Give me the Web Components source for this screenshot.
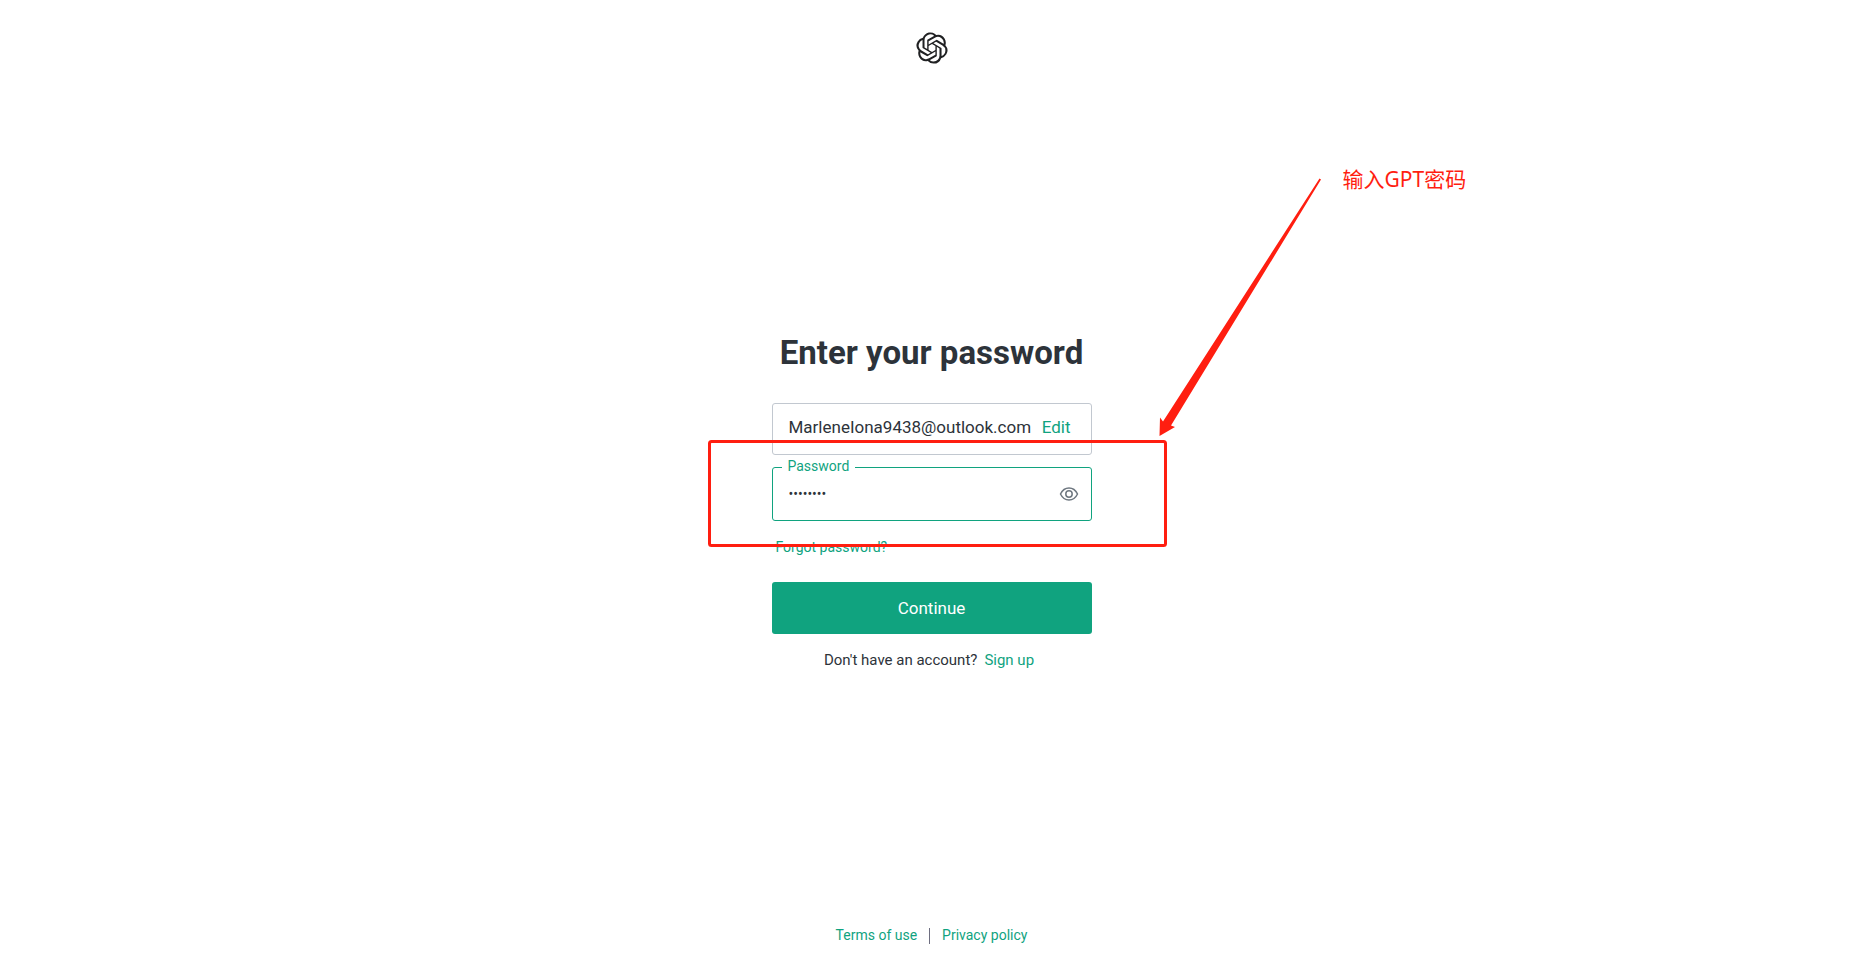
<!DOCTYPE html>
<html lang="en">
<head>
<meta charset="utf-8">
<title>Enter your password</title>
<style>
  body {
    margin: 0;
    background: #fff;
    color: #2d333a;
    font-family: Roboto, "Noto Sans CJK SC", sans-serif;
    font-size: 14px;
    line-height: 20px;
    --accent: #10a37f;
    --mark: #ff1e10;
  }
</style>
</head>
<body>
<login-page></login-page>

<template id="login-page">
  <style>
    :host { display: flex; flex-direction: column; min-height: 100vh; overflow: hidden; }
    header { display: flex; justify-content: center; padding-top: 32px; }
    main { flex: 1; display: flex; flex-direction: column; align-items: center; justify-content: center; padding-top: 13px; }
    section { position: relative; width: 320px; }
    h1 { margin: 0 -10px 30px; font-size: 33px; line-height: 40px; font-weight: 700; text-align: center; }
    form { display: flex; flex-direction: column; }
    email-box { margin-bottom: 12px; }
    a { color: var(--accent); text-decoration: none; }
    .forgot { align-self: flex-start; margin: 16px 0 25px 4px; }
    button { height: 52px; border: 0; border-radius: 3px; background: var(--accent); color: #fff; font: inherit; font-size: 17px; cursor: pointer; }
    p { display: flex; justify-content: center; gap: 7px; margin: 16px 5px 0 0; font-size: 15px; }
    footer { display: flex; justify-content: center; gap: 12px; padding-bottom: 24px; }
    footer span { width: 1px; height: 16px; margin-top: 3px; background: #6e6e80; }
  </style>
  <header><brand-logo></brand-logo></header>
  <main>
    <section>
      <h1>Enter your password</h1>
      <form onsubmit="return false">
        <email-box>MarleneIona9438@outlook.com</email-box>
        <password-field></password-field>
        <a class="forgot" href="#reset">Forgot password?</a>
        <button type="submit">Continue</button>
      </form>
      <p>Don't have an account? <a href="#signup">Sign up</a></p>
      <callout-note>输入GPT密码</callout-note>
    </section>
  </main>
  <footer><a href="#terms">Terms of use</a><span></span><a href="#privacy">Privacy policy</a></footer>
</template>

<template id="brand-logo">
  <style>:host { display: block; height: 32px; } svg { display: block; }</style>
  <svg width="32" height="32" viewBox="-.3 -.3 24.600 24.600" fill="#202123" role="img" aria-label="OpenAI"><path d="M22.2819 9.8211a5.9847 5.9847 0 0 0-.5157-4.9108 6.0462 6.0462 0 0 0-6.5098-2.9A6.0651 6.0651 0 0 0 4.9807 4.1818a5.9847 5.9847 0 0 0-3.9977 2.9 6.0462 6.0462 0 0 0 .7427 7.0966 5.98 5.98 0 0 0 .511 4.9107 6.051 6.051 0 0 0 6.5146 2.9001A5.9847 5.9847 0 0 0 13.2599 24a6.0557 6.0557 0 0 0 5.7718-4.2058 5.9894 5.9894 0 0 0 3.9977-2.9001 6.0557 6.0557 0 0 0-.7475-7.0729zm-9.022 12.6081a4.4755 4.4755 0 0 1-2.8764-1.0408l.1419-.0804 4.7783-2.7582a.7948.7948 0 0 0 .3927-.6813v-6.7369l2.02 1.1686a.071.071 0 0 1 .038.052v5.5826a4.504 4.504 0 0 1-4.4945 4.4944zm-9.6607-4.1254a4.4708 4.4708 0 0 1-.5346-3.0137l.142.0852 4.783 2.7582a.7712.7712 0 0 0 .7806 0l5.8428-3.3685v2.3324a.0804.0804 0 0 1-.0332.0615L9.74 19.9502a4.4992 4.4992 0 0 1-6.1408-1.6464zM2.3408 7.8956a4.485 4.485 0 0 1 2.3655-1.9728V11.6a.7664.7664 0 0 0 .3879.6765l5.8144 3.3543-2.0201 1.1685a.0757.0757 0 0 1-.071 0l-4.8303-2.7865A4.504 4.504 0 0 1 2.3408 7.872zm16.5963 3.8558L13.1038 8.364 15.1192 7.2a.0757.0757 0 0 1 .071 0l4.8303 2.7913a4.4944 4.4944 0 0 1-.6765 8.1042v-5.6772a.79.79 0 0 0-.407-.667zm2.0107-3.0231l-.142-.0852-4.7735-2.7818a.7759.7759 0 0 0-.7854 0L9.409 9.2297V6.8974a.0662.0662 0 0 1 .0284-.0615l4.8303-2.7866a4.4992 4.4992 0 0 1 6.6802 4.66zM8.3065 12.863l-2.02-1.1638a.0804.0804 0 0 1-.038-.0567V6.0742a4.4992 4.4992 0 0 1 7.3757-3.4537l-.142.0805L8.704 5.459a.7948.7948 0 0 0-.3927.6813zm1.0976-2.3654l2.602-1.4998 2.6069 1.4998v2.9994l-2.5974 1.4997-2.6067-1.4997Z"/></svg>
</template>

<template id="email-box">
  <style>
    :host { display: flex; align-items: center; justify-content: space-between; box-sizing: border-box; height: 52px; padding: 0 20px 4px 16px; border: 1px solid #c2c8d0; border-radius: 3px; font-size: 17px; }
    a { color: var(--accent); text-decoration: none; }
  </style>
  <span><slot></slot></span><a href="#edit">Edit</a>
</template>

<template id="password-field">
  <style>
    :host { position: relative; display: flex; align-items: center; box-sizing: border-box; height: 54px; padding: 0 12px 0 16px; border: 1px solid var(--accent); border-radius: 3px; }
    label { position: absolute; left: 9px; top: -12px; padding: 0 6px; background: #fff; color: var(--accent); }
    input { flex: 1; min-width: 0; padding: 0; border: 0; outline: 0; background: none; color: #2d333a; font: inherit; }
    button { display: flex; padding: 0; border: 0; background: none; cursor: pointer; }
  </style>
  <label for="password">Password</label>
  <input id="password" type="password" value="abcd1234">
  <button type="button" aria-label="Show password">
    <svg width="20" height="16" viewBox="0 0 20 16" fill="none" stroke="#6e7780" stroke-width="1.5"><path d="M1.500 8C3.400 4 6.200 2 10 2S16.600 4 18.500 8C16.600 12 13.800 14 10 14S3.400 12 1.500 8Z"/><circle cx="10" cy="8" r="3.2"/></svg>
  </button>
</template>

<template id="callout-note">
  <style>
    :host { position: absolute; left: -65px; top: -155px; width: 780px; height: 370px; color: var(--mark); pointer-events: none; }
    svg { display: block; }
    span { position: absolute; left: 636px; top: -14px; font: 21px/30px "Noto Sans", "Noto Sans CJK SC", sans-serif; white-space: nowrap; }
  </style>
  <svg width="620" height="370" viewBox="0 0 620 370" aria-hidden="true">
    <rect x="2.5" y="263.5" width="456" height="104" rx="2" fill="none" stroke="#ff1e10" stroke-width="3"/>
    <path d="M612.5 .5 614 1.500 464 247.500 468 249 452.500 258 453 239.500 456 243.500Z" fill="#ff1e10"/>
  </svg>
  <span><slot></slot></span>
</template>

<script>
  for (const name of ['brand-logo', 'email-box', 'password-field', 'callout-note', 'login-page']) {
    customElements.define(name, class extends HTMLElement {
      constructor() {
        super();
        this.attachShadow({ mode: 'open' }).append(document.getElementById(name).content.cloneNode(true));
      }
    });
  }
</script>
</body>
</html>
